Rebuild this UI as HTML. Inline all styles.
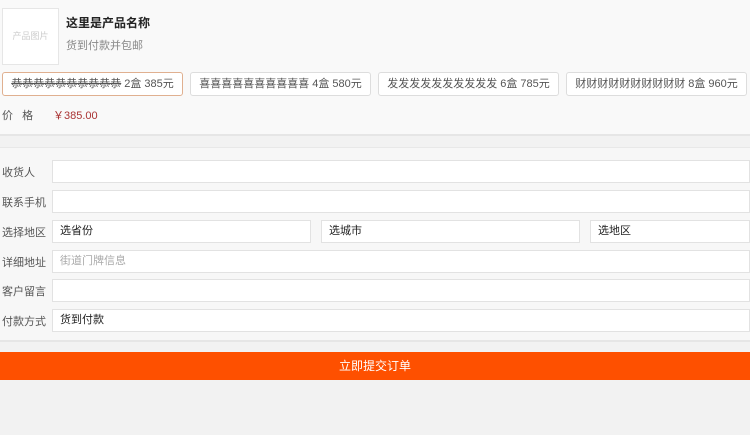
<!DOCTYPE html>
<html><head><meta charset="utf-8"><style>
*{margin:0;padding:0;box-sizing:border-box}
body{width:750px;height:435px;overflow:hidden;background:#f2f2f2;font-family:"Liberation Sans","Noto Sans CJK SC",sans-serif;font-size:12px;color:#333;position:relative}
.top{position:absolute;left:0;top:0;width:750px;height:136px;background:#f9f9f9;border-bottom:2px solid #e6e6e6}
.img{position:absolute;left:2px;top:8px;width:57px;height:57px;background:#fff;border:1px solid #e6e6e6;color:#ccc;font-size:9px;text-align:center;line-height:55px}
.t{position:absolute;left:66px;top:14px;font-weight:bold;font-size:12px;color:#222}
.s{position:absolute;left:66px;top:37px;color:#888;font-size:11px}
.b{position:absolute;top:72px;width:181px;height:24px;border:1px solid #ddd;border-radius:3px;background:#fff;text-align:center;line-height:22px;font-size:11px;color:#555}
.b.on{border-color:#e0b090}
.p{position:absolute;top:107px;left:2px;color:#555;font-size:11px}
.pv{position:absolute;top:107px;left:53px;color:#a33;font-size:11px}
.mid{position:absolute;left:0;top:147px;width:750px;height:195px;background:#f7f7f7;border-top:1px solid #e8e8e8;border-bottom:2px solid #e6e6e6}
.l{position:absolute;left:2px;color:#555;font-size:11px}
.i{position:absolute;height:23px;background:#fff;border:1px solid #e2e2e2;line-height:21px;padding-left:7px;font-size:11px;color:#222}
.btn{position:absolute;left:0;top:352px;width:750px;height:28px;background:#fe5000;color:#fff;text-align:center;line-height:28px;font-size:12px}
</style></head><body>
<div class="top">
<div class="img">产品图片</div>
<div class="t">这里是产品名称</div>
<div class="s">货到付款并包邮</div>
<div class="b on" style="left:2px"><s>恭恭恭恭恭恭恭恭恭恭</s> 2盒 385元</div>
<div class="b" style="left:190px">喜喜喜喜喜喜喜喜喜喜 4盒 580元</div>
<div class="b" style="left:378px">发发发发发发发发发发 6盒 785元</div>
<div class="b" style="left:566px">财财财财财财财财财财 8盒 960元</div>
<div class="p">价&nbsp;&nbsp;&nbsp;格</div>
<div class="pv">￥385.00</div>
</div>
<div class="mid"></div>
<div class="l" style="top:164px">收货人</div><div class="i" style="left:52px;top:160px;width:698px"></div>
<div class="l" style="top:194px">联系手机</div><div class="i" style="left:52px;top:190px;width:698px"></div>
<div class="l" style="top:224px">选择地区</div>
<div class="i" style="left:52px;top:220px;width:259px">选省份</div>
<div class="i" style="left:321px;top:220px;width:259px">选城市</div>
<div class="i" style="left:590px;top:220px;width:160px">选地区</div>
<div class="l" style="top:254px">详细地址</div><div class="i" style="left:52px;top:250px;width:698px;color:#aaa">街道门牌信息</div>
<div class="l" style="top:283px">客户留言</div><div class="i" style="left:52px;top:279px;width:698px"></div>
<div class="l" style="top:313px">付款方式</div><div class="i" style="left:52px;top:309px;width:698px">货到付款</div>
<div class="btn">立即提交订单</div>
</body></html>
